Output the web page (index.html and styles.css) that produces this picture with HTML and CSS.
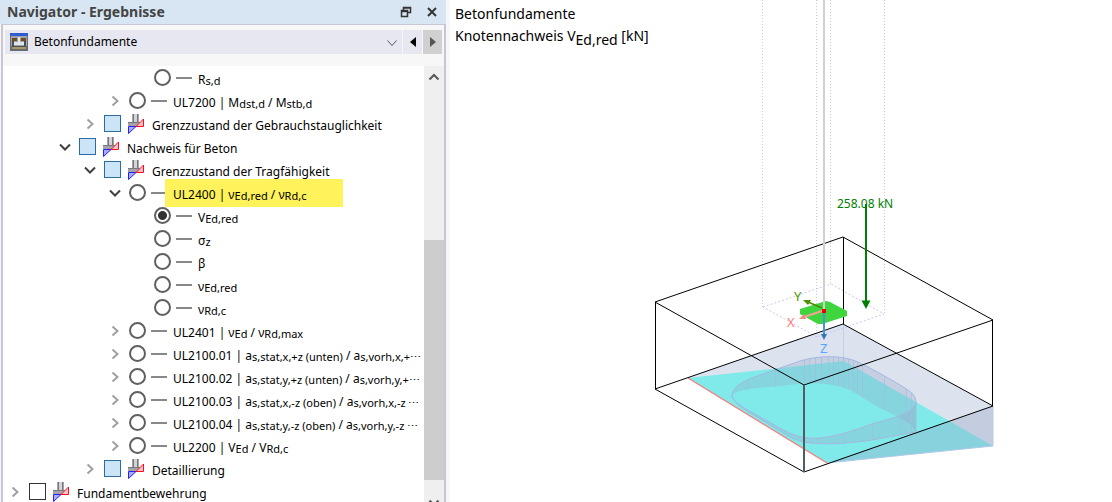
FILE: index.html
```html
<!DOCTYPE html>
<html lang="de">
<head>
<meta charset="utf-8">
<title>Navigator - Ergebnisse</title>
<link rel="stylesheet" href="styles.css">
</head>
<body>
<svg class="defs" aria-hidden="true">
  <symbol id="closed" viewBox="0 0 12 14"><path d="M3.500 2.500 8.500 7l-5 4.500" fill="none" stroke="#a0a0a0" stroke-width="2"/></symbol>
  <symbol id="open" viewBox="0 0 12 14"><path d="M1 4.500 6 9.500l5-5" fill="none" stroke="#404040" stroke-width="2"/></symbol>
  <symbol id="footing" viewBox="0 0 16 20">
    <path d="M4 0h7v8h5v4H0V8h4z" fill="#a3a3a8"/>
    <path d="M6 0h3v8H6z" fill="#d4d4d8"/>
    <path d="M5.500 0v8.500M9.500 0v8.500M0 8.500h11" fill="none" stroke="#77777d"/>
    <path d="M.5 12.500H8L.5 19.500z" fill="#a9a9ff" stroke="#2424f0"/>
    <path d="M15.500 5v7.500H8z" fill="#ffc2c8" stroke="#f5101c"/>
  </symbol>
</svg>
<div class="app">
  <aside class="navigator">
    <header class="titlebar">
      <h1 class="title">Navigator - Ergebnisse</h1>
      <button class="window-button" aria-label="Fenster lösen"><svg width="12" height="12" viewBox="0 0 12 12"><path d="M3.500 4V1.500h7v5H8M3.500 2h7" fill="none" stroke="#333" stroke-width="1.500"/><path d="M1.500 4.500h6v6h-6zM1.500 5.500h6" fill="none" stroke="#333" stroke-width="1.500"/></svg></button>
      <button class="window-button" aria-label="Schließen"><svg width="12" height="12" viewBox="0 0 12 12"><path d="m2 2 8 8m0-8-8 8" stroke="#333" stroke-width="2"/></svg></button>
    </header>
    <div class="panel">
      <div class="toolbar">
        <div class="picker">
          <svg width="18" height="18" viewBox="0 0 18 18"><path d="M0 0h18v18H0z" fill="#666c72"/><path d="M0 0h18v3H0z" fill="#315bd0"/><path d="M1 3h16v10H1z" fill="#9da3aa"/><path d="M2 5h5v3H2zM11 5h5v3h-5z" fill="#75491f"/><path d="M8 4h2v5h4v3H4V9h4z" fill="#e0e5ea"/><path d="M2 8h2v5h10V8h2v6H2z" fill="#4a4f50"/><path d="M2 14h14v2H2z" fill="#a89868"/></svg>
          <select class="select" aria-label="Ergebniskategorie"><option>Betonfundamente</option></select>
          <svg class="picker-arrow" width="12" height="8" viewBox="0 0 12 8"><path d="m1.500 1.500 4.500 5 4.500-5" fill="none" stroke="#555"/></svg>
        </div>
        <button class="step" aria-label="Zurück"><svg width="6" height="10" viewBox="0 0 6 10"><path d="M6 0v10L0 5z" fill="#000"/></svg></button>
        <button class="step step-next" aria-label="Weiter"><svg width="6" height="10" viewBox="0 0 6 10"><path d="M0 0v10l6-5z" fill="#555"/></svg></button>
      </div>
      <div class="content">
        <ul class="tree">
          <li class="row level-5"><span class="twist"></span><input class="radio" type="radio" name="result" id="n1"><i class="dash"></i><label class="label" for="n1">R<span class="sub">s,d</span></label></li>
          <li class="row level-4"><svg class="twist"><use href="#closed"/></svg><input class="radio" type="radio" name="result" id="n2"><i class="dash"></i><label class="label" for="n2">UL7200 | M<span class="sub">dst,d</span> / M<span class="sub">stb,d</span></label></li>
          <li class="row level-3"><svg class="twist"><use href="#closed"/></svg><input class="check partial" type="checkbox" id="n3"><svg class="footing"><use href="#footing"/></svg><label class="label" for="n3">Grenzzustand der Gebrauchstauglichkeit</label></li>
          <li class="row level-2"><svg class="twist"><use href="#open"/></svg><input class="check partial" type="checkbox" id="n4"><svg class="footing"><use href="#footing"/></svg><label class="label" for="n4">Nachweis für Beton</label></li>
          <li class="row level-3"><svg class="twist"><use href="#open"/></svg><input class="check partial" type="checkbox" id="n5"><svg class="footing"><use href="#footing"/></svg><label class="label" for="n5">Grenzzustand der Tragfähigkeit</label></li>
          <li class="row level-4"><svg class="twist"><use href="#open"/></svg><input class="radio" type="radio" name="result" id="n6"><i class="dash"></i><label class="label marked" for="n6">UL2400 | ν<span class="sub">Ed,red</span> / ν<span class="sub">Rd,c</span></label></li>
          <li class="row level-5"><span class="twist"></span><input class="radio" type="radio" name="result" id="n7" checked><i class="dash"></i><label class="label" for="n7">V<span class="sub">Ed,red</span></label></li>
          <li class="row level-5"><span class="twist"></span><input class="radio" type="radio" name="result" id="n8"><i class="dash"></i><label class="label" for="n8">σ<span class="sub">z</span></label></li>
          <li class="row level-5"><span class="twist"></span><input class="radio" type="radio" name="result" id="n9"><i class="dash"></i><label class="label" for="n9">β</label></li>
          <li class="row level-5"><span class="twist"></span><input class="radio" type="radio" name="result" id="n10"><i class="dash"></i><label class="label" for="n10">ν<span class="sub">Ed,red</span></label></li>
          <li class="row level-5"><span class="twist"></span><input class="radio" type="radio" name="result" id="n11"><i class="dash"></i><label class="label" for="n11">ν<span class="sub">Rd,c</span></label></li>
          <li class="row level-4"><svg class="twist"><use href="#closed"/></svg><input class="radio" type="radio" name="result" id="n12"><i class="dash"></i><label class="label" for="n12">UL2401 | ν<span class="sub">Ed</span> / ν<span class="sub">Rd,max</span></label></li>
          <li class="row level-4"><svg class="twist"><use href="#closed"/></svg><input class="radio" type="radio" name="result" id="n13"><i class="dash"></i><label class="label" for="n13">UL2100.01 | a<span class="sub">s,stat,x,+z (unten)</span> / a<span class="sub">s,vorh,x,+⋯</span></label></li>
          <li class="row level-4"><svg class="twist"><use href="#closed"/></svg><input class="radio" type="radio" name="result" id="n14"><i class="dash"></i><label class="label" for="n14">UL2100.02 | a<span class="sub">s,stat,y,+z (unten)</span> / a<span class="sub">s,vorh,y,+⋯</span></label></li>
          <li class="row level-4"><svg class="twist"><use href="#closed"/></svg><input class="radio" type="radio" name="result" id="n15"><i class="dash"></i><label class="label" for="n15">UL2100.03 | a<span class="sub">s,stat,x,-z (oben)</span> / a<span class="sub">s,vorh,x,-z ⋯</span></label></li>
          <li class="row level-4"><svg class="twist"><use href="#closed"/></svg><input class="radio" type="radio" name="result" id="n16"><i class="dash"></i><label class="label" for="n16">UL2100.04 | a<span class="sub">s,stat,y,-z (oben)</span> / a<span class="sub">s,vorh,y,-z ⋯</span></label></li>
          <li class="row level-4"><svg class="twist"><use href="#closed"/></svg><input class="radio" type="radio" name="result" id="n17"><i class="dash"></i><label class="label" for="n17">UL2200 | V<span class="sub">Ed</span> / V<span class="sub">Rd,c</span></label></li>
          <li class="row level-3"><svg class="twist"><use href="#closed"/></svg><input class="check partial" type="checkbox" id="n18"><svg class="footing"><use href="#footing"/></svg><label class="label" for="n18">Detaillierung</label></li>
          <li class="row level-0"><svg class="twist"><use href="#closed"/></svg><input class="check" type="checkbox" id="n19"><svg class="footing"><use href="#footing"/></svg><label class="label" for="n19">Fundamentbewehrung</label></li>
        </ul>
        <div class="scrollbar">
          <svg class="scroll-up" width="12" height="8" viewBox="0 0 12 8"><path d="M1.500 6.500 6 2l4.500 4.500" fill="none" stroke="#555" stroke-width="2"/></svg>
          <div class="track-top"></div>
          <div class="thumb"></div>
          <div class="track-bottom"><svg class="scroll-down" width="12" height="8" viewBox="0 0 12 8"><path d="M1.500 1.500 6 6l4.500-4.500" fill="none" stroke="#555" stroke-width="2"/></svg></div>
        </div>
      </div>
    </div>
  </aside>
  <main class="viewport">
    <div class="caption">
      <p class="line">Betonfundamente</p>
      <p class="line">Knotennachweis V<span class="caption-sub">Ed,red</span> [kN]</p>
    </div>
    <svg class="scene" viewBox="450 0 662 502" role="img" aria-label="Fundament mit Knotenlast">
      <path d="M688 378 843 324 993 406V446L827 463z" fill="#dce3ee"/>
      <path d="M688 378 844 361 993 446 827 463z" fill="#80eaea"/>
      <path d="M827 463 993 406V446z" fill="#94a1c2" fill-opacity=".33"/>
      <path d="M843.500 324V361" stroke="#bdd2ea"/>
      <path d="M827 463 993 446V406" fill="none" stroke="#b4cbe8"/>
      <g fill="#94a1c2" fill-opacity=".3">
        <path d="M732 395C733 386 745 380 760 375L800 361C820 355 842 355 858 362C880 373 899 384 908 390C914 394 916 398 916 402V432C910 420 895 416 880 408C863 399 855 390 838 386C820 382 805 383 790 385C766 388 740 388 732 395z"/>
        <path d="M916 402C915 409 907 413 896 417L872 424C850 432 826 440 808 438C790 436 777 426 762 418C746 409 732 402 732 395C733 404 747 411 762 420C782 432 796 443 812 443C832 445 850 443 872 440L916 432z"/>
      </g>
      <g fill="none" stroke="#a3b9df">
        <path d="M732 395C733 386 745 380 760 375L800 361C820 355 842 355 858 362C880 373 899 384 908 390C914 394 916 398 916 402C915 409 907 413 896 417L872 424C850 432 826 440 808 438C790 436 777 426 762 418C746 409 732 402 732 395C733 404 747 411 762 420C782 432 796 443 812 443C832 445 850 443 872 440L916 432V402"/>
        <path stroke-opacity=".6" d="M747.500 380v10M775.500 370v17M804.500 360v23M809.500 359v24M815.500 358v25M821.500 357v26M828.500 357v27M833.500 357v28M838.500 357v29M843.500 358v30M848.500 359v31M853.500 360v33M857.500 362v33M862.500 365v33M884.500 377v33M906.500 389v31M911.500 393v30M792.500 435v4M802.500 438v4M811.500 438v5M818.500 438v6M825.500 437v7M833.500 436v8M843.500 433v11M872.500 424v16M900.500 416v19M905.500 414v20M911.500 410v23"/>
      </g>
      <path d="M688 378 827 463" stroke="#f77f7c" stroke-width="1.300"/>
      <g fill="none" stroke="#c6c6fa" stroke-dasharray="1 2">
        <path d="M762.500 0V307M816.500 0V337M830.500 0V284M884.500 0V314"/>
        <path stroke-dasharray="2 2" d="M763 307 831 284 884 314 817 337z"/>
      </g>
      <g fill="none" stroke="#000">
        <path d="M655 302 843 237 993 320 804 385z"/>
        <path d="M655 389 843 324 993 406 804 472z"/>
        <path d="M655.500 302v87M843.500 237v87M992.500 320v86"/>
      </g>
      <path d="M804 385v87" stroke="#4e5e62" stroke-width="2"/>
      <path d="M800 309 826 301 830 302 847 311V316L822 324H818L800 314z" fill="#3ed53f"/>
      <path d="M824 0V309" stroke="#d0d0d0" stroke-width="2"/>
      <path d="M822 308 808 302" stroke="#4c8c00" stroke-width="1.500"/>
      <path d="M803 300 811 300 808 305z" fill="#4c9000"/>
      <path d="M822 311 804 317" stroke="#f6a295" stroke-width="2"/>
      <path d="M799 319 804 314 806 319z" fill="#f28b88"/>
      <path d="M824 312V336" stroke="#4597d8" stroke-width="2"/>
      <path d="M821 334H827L824 340z" fill="#3577b5"/>
      <path d="M822 309H826V313H822z" fill="#f00000"/>
      <path d="M866 204V303" stroke="#008000" stroke-width="2"/>
      <path d="M861.500 300.500H870.500L866 309z" fill="#008000"/>
      <text class="load" x="837" y="208">258.08 kN</text>
      <text class="axis axis-x" x="787" y="327">X</text>
      <text class="axis axis-y" x="794" y="301">Y</text>
      <text class="axis axis-z" x="820" y="353">Z</text>
    </svg>
  </main>
</div>
</body>
</html>
```
FILE: styles.css
```css
* { box-sizing: border-box; }
body { margin: 0; font: 12px/20px "Noto Sans", sans-serif; color: #000; }
.defs { position: absolute; width: 0; height: 0; }
.app { display: flex; height: 100vh; overflow: hidden; background: #f7f7f7; }
.navigator { display: flex; flex-direction: column; flex: 0 0 446px; min-width: 0; }
.titlebar { display: flex; align-items: center; gap: 12px; height: 24px; padding: 0 7px; background: #d8e6f3; }
.title { flex: 1; margin: 0; font-size: 14px; line-height: 24px; color: #444; }
.window-button { display: flex; padding: 1px; border: 0; background: none; }
.panel { flex: 1; display: flex; flex-direction: column; min-height: 0; margin-left: 1px; border: 2px solid #c8c6d4; border-top-width: 1px; border-bottom: 0; background: #f7f7f7; }
.toolbar { display: flex; gap: 1px; height: 41px; padding: 5px 2px 12px; flex: none; }
.picker { position: relative; flex: 1; display: flex; align-items: center; gap: 6px; padding-left: 5px; background: #e7e7f1; }
.select { appearance: none; flex: 1; height: 24px; padding: 0; border: 0; background: none; font: inherit; color: #000; }
.picker-arrow { position: absolute; right: 4px; top: 9px; pointer-events: none; }
.step { display: flex; align-items: center; justify-content: center; width: 19px; padding: 0; border: 0; background: #e7e7f1; }
.step-next { background: #d0d0d0; }
.content { flex: 1; display: flex; min-height: 0; overflow: hidden; background: #fff; }
.tree { flex: 1; min-width: 0; margin: 0; padding: 0; list-style: none; }
.row { display: flex; align-items: center; height: 23px; white-space: nowrap; }
.level-0 { padding-left: 6px; }
.level-2 { padding-left: 56px; }
.level-3 { padding-left: 81px; }
.level-4 { padding-left: 106px; }
.level-5 { padding-left: 131px; }
.twist { flex: none; width: 12px; height: 14px; margin-right: 8px; }
.radio, .check { appearance: none; flex: none; width: 17px; height: 17px; margin: 0; border: 1px solid #333; background: #fff; }
.radio { border: 2px solid #606060; border-radius: 50%; }
.radio:checked { background: radial-gradient(circle, #333 4px, #fff 5px); }
.check.partial { border-color: #2b6ca3; background: #cce4f7; }
.dash { flex: none; width: 16px; height: 2px; margin: 0 0 0 5px; background: #888; }
.footing { flex: none; width: 16px; height: 20px; margin-left: 7px; }
.label { padding: 4px 0 0 6px; line-height: 19px; }
.footing + .label { padding-left: 8px; }
.marked { width: 178px; height: 28px; margin-left: -2px; padding: 6px 0 0 8px; background: #fff25a; }
.sub { position: relative; top: 1px; font-size: 11px; }
.scrollbar { flex: 0 0 20px; display: flex; flex-direction: column; align-items: center; background: #efefef; }
.scroll-up { flex: none; margin-top: 7px; }
.track-top { flex: 159; }
.thumb { flex: 240; width: 20px; background: #cdcdcd; }
.track-bottom { flex: 22; display: flex; align-items: flex-end; }
.scroll-down { margin-bottom: -5px; }
.viewport { position: relative; flex: 1; min-width: 0; margin-left: 4px; background: #fff; }
.caption { position: absolute; left: 5px; top: 3px; font-size: 14px; }
.line { margin: 0; line-height: 22px; }
.caption-sub { position: relative; top: 4px; }
.scene { display: block; width: 100%; height: 100%; }
.load { font-size: 12px; fill: #008000; }
.axis { font-size: 13px; }
.axis-x { fill: #ff7878; }
.axis-y { fill: #4c9c00; }
.axis-z { fill: #55a5ff; }
```
